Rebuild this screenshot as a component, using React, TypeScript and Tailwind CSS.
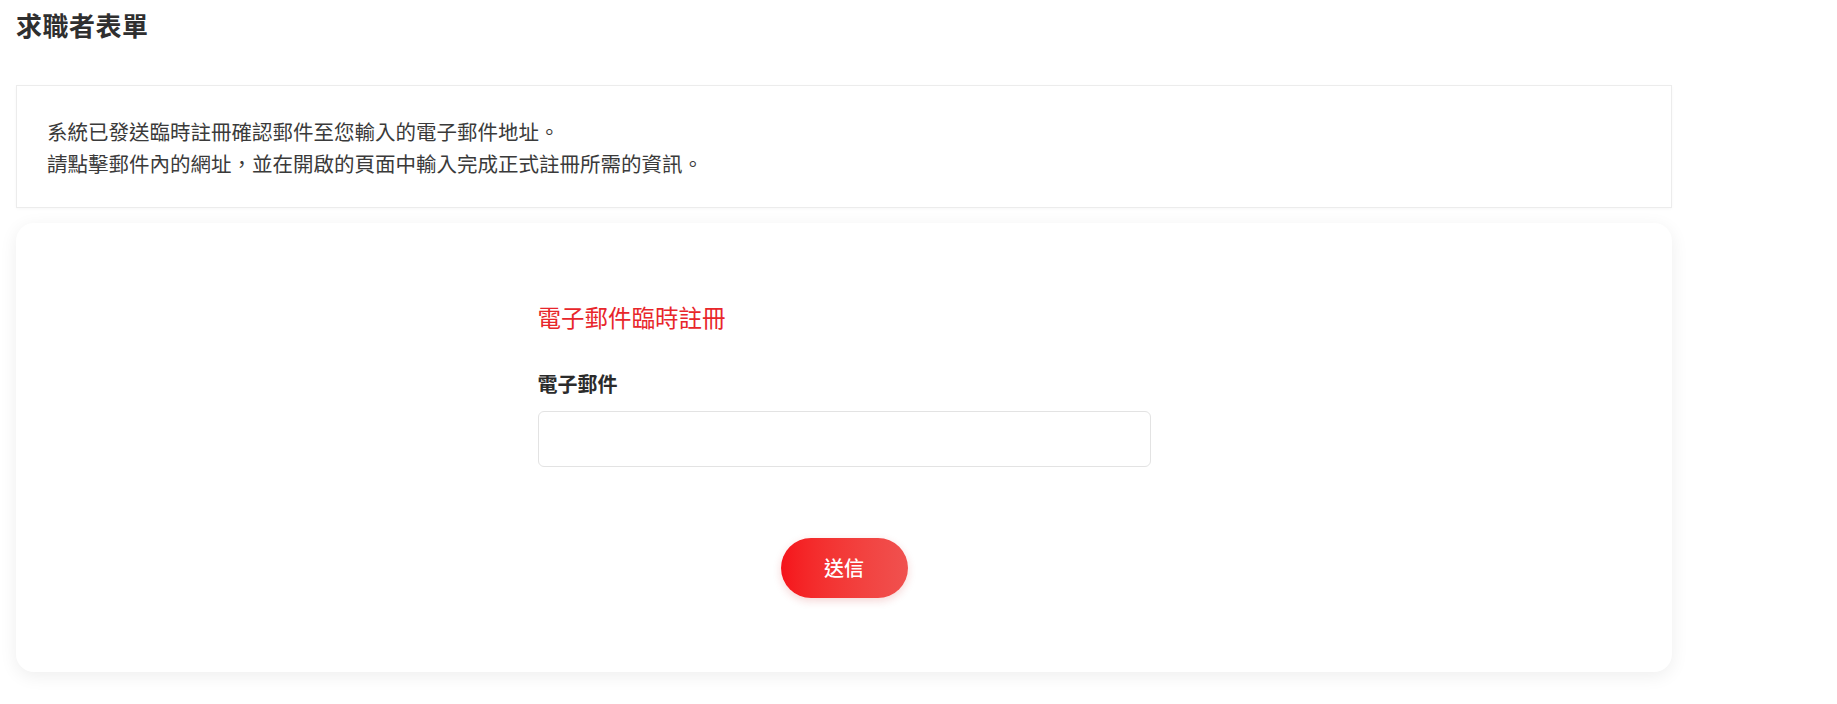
export default function App() {
  return (
    <div
      className="min-h-[704px] bg-white pl-4 pr-[165px] pt-[7px] text-[#333]"
      style={{ fontFamily: '"Noto Sans CJK TC", "Liberation Sans", sans-serif' }}
    >
      <h1 className="text-[26px] font-bold leading-9 tracking-[0.5px] text-[#2f2f2f]">求職者表單</h1>

      <div className="mt-[42px] border border-[#ececec] bg-white pb-7 pl-[30px] pt-[29px] shadow-[0_1px_3px_rgba(0,0,0,0.03)]">
        <p className="text-[20.5px] leading-8 text-[#3a3a3a]">
          系統已發送臨時註冊確認郵件至您輸入的電子郵件地址。
          <br />
          請點擊郵件內的網址，並在開啟的頁面中輸入完成正式註冊所需的資訊。
        </p>
      </div>

      <div className="mt-[15px] rounded-[18px] bg-white pb-[74px] pt-[78px] shadow-[0_4px_18px_rgba(0,0,0,0.07)]">
        <div className="mx-auto w-[613px]">
          <h2 className="text-[23.5px] leading-8 text-[#e8262b]">電子郵件臨時註冊</h2>
          <label className="mt-[37px] block text-[20px] font-bold leading-7 text-[#2b2b2b]">電子郵件</label>
          <input
            type="email"
            className="mt-[13px] block h-14 w-full rounded-md border border-[#e3e3e3] bg-white px-4 text-[18px] outline-none"
          />
          <button
            type="button"
            className="mx-auto mt-[71px] block h-[60px] w-[127px] rounded-full bg-gradient-to-r from-[#f5121a] to-[#f0514f] text-[20px] font-medium text-white shadow-[0_3px_8px_rgba(200,30,30,0.18)]"
          >
            送信
          </button>
        </div>
      </div>
    </div>
  );
}
